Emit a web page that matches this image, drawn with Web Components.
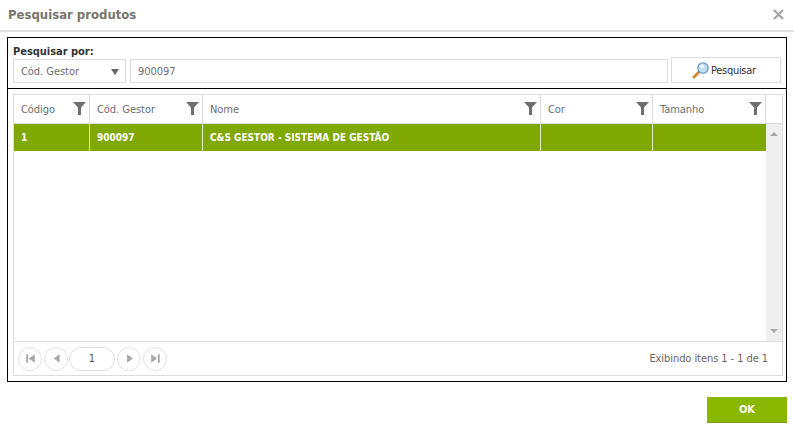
<!DOCTYPE html>
<html lang="pt"><head><meta charset="utf-8"><title>Pesquisar produtos</title>
<style>
html,body{margin:0;padding:0;background:#fff}
body{font-family:"DejaVu Sans Condensed","DejaVu Sans","Liberation Sans",sans-serif;width:794px;height:428px;overflow:hidden}
</style></head><body>
<product-search-dialog></product-search-dialog>
<script>
function el(name, css, html){
  customElements.define(name, class extends HTMLElement{
    constructor(){super();const s=this.attachShadow({mode:'open'});s.innerHTML='<style>'+css+'</style>'+html;}
  });
}
const funnel='<svg width="13" height="13" viewBox="0 0 13 13"><path d="M0 0H13L8 5.5V13H5V5.5Z" fill="#6f6f6f"/></svg>';
el('grid-head',`
:host{display:flex;flex:none;height:29px;border-bottom:1px solid #dcdcdc;box-sizing:border-box;font-size:11px;letter-spacing:-.05px;color:#6e6e6e}
.c{box-sizing:border-box;border-right:1px solid #dcdcdc;display:flex;align-items:center;justify-content:space-between;padding:0 3px 0 7px}
.c svg{margin-top:-1px}
.e{flex:1}
`,`<div class="c" style="width:76px"><span>Código</span>${funnel}</div>
<div class="c" style="width:113px"><span>Cód. Gestor</span>${funnel}</div>
<div class="c" style="width:338px"><span>Nome</span>${funnel}</div>
<div class="c" style="width:112px"><span>Cor</span>${funnel}</div>
<div class="c" style="width:113px"><span>Tamanho</span>${funnel}</div><div class="e"></div>`);
el('grid-body',`
:host{display:flex;flex:1;min-height:0}
.main{flex:1}
.row{display:flex;height:27px;background:#7fa800;color:#fff;font-size:10px;font-weight:bold}
.c{box-sizing:border-box;border-right:1px solid #e4eccb;padding:0 7px;display:flex;align-items:center}
.bar{width:16px;background:#efefef;display:flex;flex-direction:column;justify-content:space-between;align-items:center;padding:8px 0 8px;box-sizing:border-box}
.u{border:4px solid transparent;border-top:0;border-bottom:4px solid #a9a9a9}
.d{border:4px solid transparent;border-bottom:0;border-top:4px solid #a9a9a9}
`,`<div class="main"><div class="row"><div class="c" style="width:76px">1</div><div class="c" style="width:113px">900097</div><div class="c" style="width:338px">C&amp;S GESTOR - SISTEMA DE GESTÃO</div><div class="c" style="width:112px"></div><div class="c" style="width:113px;border-right:0"></div></div></div><div class="bar"><i class="u"></i><i class="d"></i></div>`);
const pb=(p,m)=>`<span class="b" style="margin-right:${m}px"><svg width="11" height="11" viewBox="0 0 9 9" fill="#a8a8a8">${p}</svg></span>`;
el('grid-pager',`
:host{display:flex;flex:none;align-items:center;height:34px;border-top:1px solid #dcdcdc;box-sizing:border-box;padding:0 14px 0 4px;font-size:11px;color:#6e6e6e}
.b{width:22px;height:22px;border:1px solid #e2e2e2;border-radius:50%;display:flex;align-items:center;justify-content:center;box-sizing:content-box}
.p{width:44px;height:22px;border:1px solid #dedede;border-radius:12px;display:flex;align-items:center;justify-content:center;margin-right:2px;color:#555}
.s{margin-left:auto;color:#666;letter-spacing:-.07px}
`,pb('<path d="M1 1h1.6v7H1zM8 1v7L3.2 4.5z"/>',2)+pb('<path d="M7 1v7L2.2 4.5z"/>',1)+`<span class="p">1</span>`+pb('<path d="M2.5 1v7L7.3 4.5z"/>',2)+pb('<path d="M6.4 1H8v7H6.4zM1 1v7L5.8 4.5z"/>',0)+`<span class="s">Exibindo itens 1 - 1 de 1</span>`);
el('data-grid',`
:host{display:flex;flex-direction:column;height:282px;border:1px solid #dcdcdc;box-sizing:border-box}
`,`<grid-head></grid-head><grid-body></grid-body><grid-pager></grid-pager>`);
el('search-bar',`
:host{display:block;height:51px;box-sizing:border-box;padding:7px 5px 0 5px;border-bottom:1px solid #000}
label{display:block;font-size:11px;font-weight:bold;color:#333;line-height:13px;height:12px;letter-spacing:-.03px}
.r{display:flex;align-items:flex-end;height:26px}
.f{box-sizing:border-box;height:24px;border:1px solid #dcdcdc;display:flex;align-items:center;font-size:11px;color:#6e6e6e;padding:0 7px;letter-spacing:-.05px}
.sel{width:113px;justify-content:space-between;padding-right:6px;margin-right:4px}
.sel i{border:4.5px solid transparent;border-bottom:0;border-top:6px solid #666;margin-top:2px}
.inp{width:538px;margin-right:3px}
.btn{box-sizing:border-box;width:110px;height:26px;border:1px solid #dcdcdc;display:flex;align-items:center;padding-left:20px;gap:1px;font-size:11px;letter-spacing:-.3px;color:#333}
`,`<label>Pesquisar por:</label><div class="r"><div class="f sel"><span>Cód. Gestor</span><i></i></div><div class="f inp">900097</div>
<div class="btn"><svg width="18" height="18" viewBox="0 0 18 18"><path d="M7.5 10.5 2 16" stroke="#d0893a" stroke-width="3" stroke-linecap="round"/><circle cx="11" cy="7" r="5.2" fill="#bfe0f7" stroke="#6c9bc4" stroke-width="1.3"/><circle cx="10" cy="5.6" r="2" fill="#eef8ff"/></svg><span>Pesquisar</span></div></div>`);
el('search-frame',`
:host{display:block;margin:5px 7px 0 7px;height:345px;box-sizing:border-box;border:1px solid #000}
.g{padding:5px 3px 0 5px}
`,`<search-bar></search-bar><div class="g"><data-grid></data-grid></div>`);
el('product-search-dialog',`
:host{display:block;width:794px;height:428px;position:relative}
header{height:32px;box-sizing:border-box;border-bottom:2px solid #e2e2e2;display:flex;align-items:center;justify-content:space-between;padding:0 10px 1px 8px}
h1{margin:0;font-size:13px;font-weight:bold;color:#76756f}
footer{display:flex;justify-content:flex-end;padding:15px 7px 0 0}
.ok{width:80px;height:26px;background:#8ab800;color:#fff;font-size:11px;font-weight:bold;display:flex;align-items:center;justify-content:center;border-bottom:1px solid #7a9f10;box-sizing:border-box}
`,`<header><h1>Pesquisar produtos</h1><svg width="11" height="11" viewBox="0 0 11 11"><path d="M1 1l9 9M10 1l-9 9" stroke="#a5a5a5" stroke-width="2.2"/></svg></header>
<search-frame></search-frame><footer><div class="ok">OK</div></footer>`);
</script></body></html>
